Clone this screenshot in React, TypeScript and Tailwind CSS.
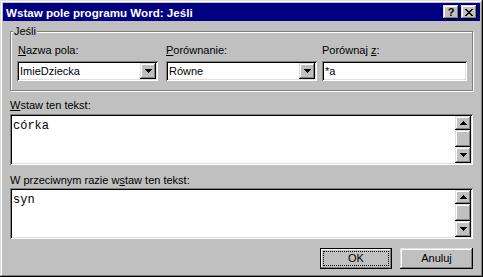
import React from "react";

const raised =
  "shadow-[inset_-1px_-1px_#000,inset_1px_1px_#dfdfdf,inset_-2px_-2px_#808080,inset_2px_2px_#fff]";
const sunken =
  "shadow-[inset_1px_1px_#808080,inset_-1px_-1px_#fff,inset_2px_2px_#000,inset_-2px_-2px_#dfdfdf]";

const ArrowDown = () => (
  <svg width="7" height="4" viewBox="0 0 7 4" shapeRendering="crispEdges">
    <path d="M0 0h7v1h-1v1h-1v1h-1v1h-1v-1h-1v-1h-1v-1h-1z" fill="#000" />
  </svg>
);

const ArrowUp = () => (
  <svg width="7" height="4" viewBox="0 0 7 4" shapeRendering="crispEdges">
    <path d="M3 0h1v1h1v1h1v1h1v1h-7v-1h1v-1h1v-1h1z" fill="#000" />
  </svg>
);

const Combo = ({ value, width }: { value: string; width: string }) => (
  <div className={`flex h-[20px] bg-white p-[2px] ${width} ${sunken}`}>
    <div className="flex flex-1 items-center pl-[1px] leading-[13px]">{value}</div>
    <div className={`flex w-[16px] items-center justify-center bg-[#c0c0c0] ${raised}`}>
      <ArrowDown />
    </div>
  </div>
);

const TextBox = ({ text }: { text: string }) => (
  <div className={`flex h-[51px] bg-white p-[2px] ${sunken}`}>
    <div className="flex-1 pl-[1px] pt-[3px] font-['Liberation_Mono','Courier_New',monospace] text-[12px] leading-[14px]">
      {text}
    </div>
    <div className="flex w-[16px] flex-col bg-[#c0c0c0]">
      <div className={`flex h-[14px] items-center justify-center ${raised}`}>
        <ArrowUp />
      </div>
      <div className={`flex-1 ${raised}`} />
      <div className={`flex h-[16px] items-center justify-center ${raised}`}>
        <ArrowDown />
      </div>
    </div>
  </div>
);

export default function App() {
  return (
    <div
      className={`flex h-[277px] w-[483px] flex-col overflow-hidden bg-[#c0c0c0] p-[3px] font-['Liberation_Sans',Arial,sans-serif] text-[11px] leading-[13px] text-black ${raised}`}
    >
      {/* title bar */}
      <div className="flex h-[18px] items-center bg-[#000080] pl-[3px] pr-[3px]">
        <span className="text-[11.6px] font-bold text-white">Wstaw pole programu Word: Jeśli</span>
        <div className="ml-auto flex gap-[2px]">
          <div className={`flex h-[14px] w-[16px] items-center justify-center bg-[#c0c0c0] text-[11px] font-bold ${raised}`}>
            ?
          </div>
          <div className={`flex h-[14px] w-[16px] items-center justify-center bg-[#c0c0c0] ${raised}`}>
            <svg width="8" height="7" viewBox="0 0 8 7" shapeRendering="crispEdges">
              <path
                d="M0 0h2v1h1v1h2v-1h1v-1h2v1h-1v1h-1v1h-1v1h1v1h1v1h1v1h-2v-1h-1v-1h-2v1h-1v1h-2v-1h1v-1h1v-1h1v-1h-1v-1h-1v-1h-1z"
                fill="#000"
              />
            </svg>
          </div>
        </div>
      </div>

      <div className="flex flex-1 flex-col px-[7px]">
        {/* group box */}
        <div className="relative mt-[10px] border border-[#808080] px-[6px] pb-[9px] pt-[12px] shadow-[inset_1px_1px_#fff,1px_1px_#fff]">
          <span className="absolute left-[2px] top-[-7px] bg-[#c0c0c0] px-[1px]">Jeśli</span>
          <div className="flex gap-[8px]">
            <div className="flex flex-col gap-[4px]">
              <span className="pl-[1px]">
                <u className="underline-offset-[1px]">N</u>azwa pola:
              </span>
              <Combo value="ImieDziecka" width="w-[141px]" />
            </div>
            <div className="flex flex-col gap-[4px]">
              <span>
                <u className="underline-offset-[1px]">P</u>orównanie:
              </span>
              <Combo value="Równe" width="w-[151px]" />
            </div>
            <div className="ml-[-3px] flex flex-col gap-[4px]">
              <span>
                Porównaj <u className="underline-offset-[1px]">z</u>:
              </span>
              <div className={`flex h-[20px] w-[145px] items-center bg-white px-[3px] ${sunken}`}>*a</div>
            </div>
          </div>
        </div>

        <div className="mt-[8px] flex flex-col gap-[2px]">
          <span>
            <u className="underline-offset-[1px]">W</u>staw ten tekst:
          </span>
          <TextBox text="córka" />
        </div>

        <div className="mt-[9px] flex flex-col gap-[1px]">
          <span>
            W przeciwnym razie w<u className="underline-offset-[1px]">s</u>taw ten tekst:
          </span>
          <TextBox text="syn" />
        </div>

        <div className="mt-[9px] flex justify-end gap-[8px] pr-[0px]">
          <div className="flex h-[21px] w-[72px] items-center justify-center border border-black p-[3px] shadow-[inset_-1px_-1px_#808080,inset_1px_1px_#fff]">
            <div className="flex h-full w-full items-center justify-center outline-1 outline-dotted outline-black">
              OK
            </div>
          </div>
          <div className={`flex h-[21px] w-[73px] items-center justify-center ${raised}`}>Anuluj</div>
        </div>
      </div>
    </div>
  );
}
